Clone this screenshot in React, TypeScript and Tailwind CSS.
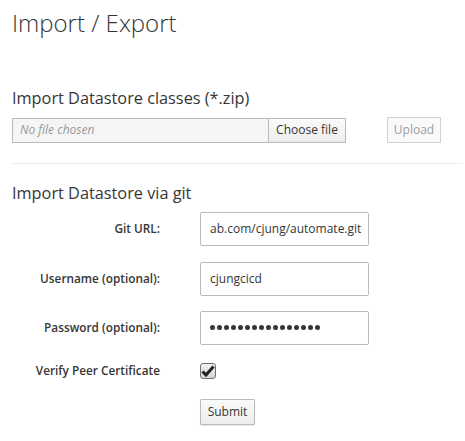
import React from "react";

const font = { fontFamily: '"Open Sans", "Noto Sans", sans-serif' };

function Row({ label, children, className = "" }: { label: string; children: React.ReactNode; className?: string }) {
  return (
    <div className={`flex items-center ${className}`}>
      <div className="w-[148px] text-right text-[11.8px] font-semibold text-[#363636] whitespace-nowrap">{label}</div>
      <div className="ml-[40px]">{children}</div>
    </div>
  );
}

export default function App() {
  return (
    <div style={font} className="bg-white w-[465px] h-[441px] px-[12px] text-[#363636] overflow-hidden">
      <h1 className="text-[24px] font-light leading-none pt-[11px] text-[#363636]">Import / Export</h1>

      <h3 className="text-[16.3px] leading-none mt-[55px] text-[#363636]">Import Datastore classes (*.zip)</h3>
      <div className="flex items-center mt-[11px]">
        <div className="flex h-[25px] w-[334px] border border-[#bbbbbb] bg-[#f5f5f5]">
          <div className="flex-1 flex items-center pl-[7px] text-[12px] italic text-[#999999]">No file chosen</div>
          <div className="w-[77px] flex items-center justify-center border-l border-[#bbbbbb] bg-gradient-to-b from-[#fafafa] to-[#ededed] text-[12px] text-[#363636]">
            Choose file
          </div>
        </div>
        <div className="ml-[41px] h-[26px] w-[54px] flex items-center justify-center border border-[#d1d1d1] bg-[#fafafa] text-[12px] text-[#9c9c9c]">
          Upload
        </div>
      </div>

      <div className="mt-[20px] h-px bg-[#ededed] w-[451px]" />

      <h3 className="text-[16.3px] leading-none mt-[21px] text-[#363636]">Import Datastore via git</h3>

      <div className="mt-[10px] flex flex-col">
        <Row label="Git URL:">
          <div className="h-[34px] w-[169px] border border-[#bbbbbb] rounded-[2px] flex items-center pl-[9px] text-[12px] text-[#363636] overflow-hidden whitespace-nowrap">
            ab.com/cjung/automate.git
          </div>
        </Row>
        <Row label="Username (optional):" className="mt-[16px]">
          <div className="h-[34px] w-[169px] border border-[#bbbbbb] rounded-[2px] flex items-center pl-[9px] text-[12px] text-[#363636]">
            cjungcicd
          </div>
        </Row>
        <Row label="Password (optional):" className="mt-[15px]">
          <div className="h-[34px] w-[169px] border border-[#bbbbbb] rounded-[2px] flex items-center pl-[9px] gap-[2px]">
            {Array.from({ length: 16 }).map((_, i) => (
              <span key={i} className="w-[5px] h-[5px] rounded-full bg-[#363636]" />
            ))}
          </div>
        </Row>
        <Row label="Verify Peer Certificate" className="mt-[18px] h-[16px]">
          <div className="w-[16px] h-[16px] rounded-[3px] border border-[#6f6f6f] bg-gradient-to-b from-[#f2f2f2] to-[#d4d4d4] flex items-center justify-center">
            <svg width="14" height="12" viewBox="0 0 14 12">
              <path d="M1.5 6.5 L5 10 L12.5 1.5" fill="none" stroke="#222" strokeWidth="3" strokeLinejoin="miter" />
            </svg>
          </div>
        </Row>
        <div className="flex mt-[20px]">
          <div className="w-[148px]" />
          <div className="ml-[40px] h-[26px] w-[55px] flex items-center justify-center border border-[#bbbbbb] rounded-[1px] bg-gradient-to-b from-[#fafafa] to-[#ededed] text-[12px] text-[#363636] shadow-[0_1px_1px_rgba(0,0,0,0.1)]">
            Submit
          </div>
        </div>
      </div>
    </div>
  );
}
